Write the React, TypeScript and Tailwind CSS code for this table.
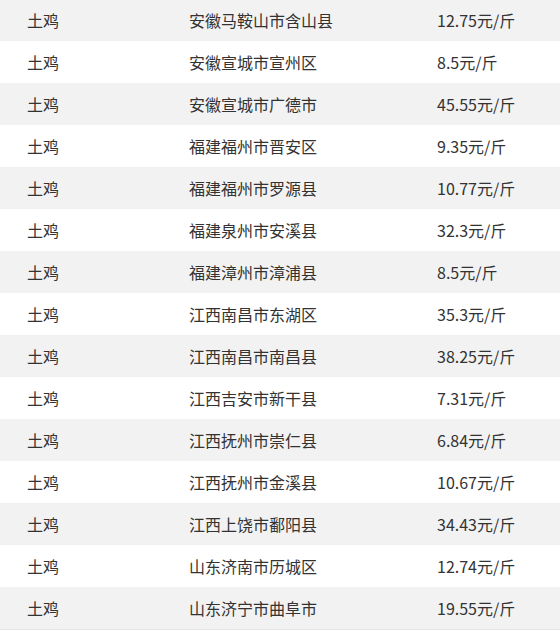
import React from "react";

const rows: [string, string, string][] = [
  ["土鸡", "安徽马鞍山市含山县", "12.75元/斤"],
  ["土鸡", "安徽宣城市宣州区", "8.5元/斤"],
  ["土鸡", "安徽宣城市广德市", "45.55元/斤"],
  ["土鸡", "福建福州市晋安区", "9.35元/斤"],
  ["土鸡", "福建福州市罗源县", "10.77元/斤"],
  ["土鸡", "福建泉州市安溪县", "32.3元/斤"],
  ["土鸡", "福建漳州市漳浦县", "8.5元/斤"],
  ["土鸡", "江西南昌市东湖区", "35.3元/斤"],
  ["土鸡", "江西南昌市南昌县", "38.25元/斤"],
  ["土鸡", "江西吉安市新干县", "7.31元/斤"],
  ["土鸡", "江西抚州市崇仁县", "6.84元/斤"],
  ["土鸡", "江西抚州市金溪县", "10.67元/斤"],
  ["土鸡", "江西上饶市鄱阳县", "34.43元/斤"],
  ["土鸡", "山东济南市历城区", "12.74元/斤"],
  ["土鸡", "山东济宁市曲阜市", "19.55元/斤"],
];

export default function App() {
  return (
    <div
      className="w-[560px] h-[630px] overflow-hidden bg-white text-[16px] text-[#333]"
      style={{ fontFamily: '"Microsoft YaHei", "Noto Sans CJK SC", "Noto Sans", sans-serif' }}
    >
      <div className="-mt-px flex flex-col border-b border-[#e5e5e5]">
        {rows.map((r, i) => (
          <div
            key={i}
            className={`grid h-[42px] grid-cols-[189px_248px_1fr] items-center ${
              i % 2 === 0 ? "bg-[#f2f2f2]" : "bg-white"
            }`}
          >
            <div className="pl-[27px]">{r[0]}</div>
            <div>{r[1]}</div>
            <div>{r[2]}</div>
          </div>
        ))}
      </div>
    </div>
  );
}
